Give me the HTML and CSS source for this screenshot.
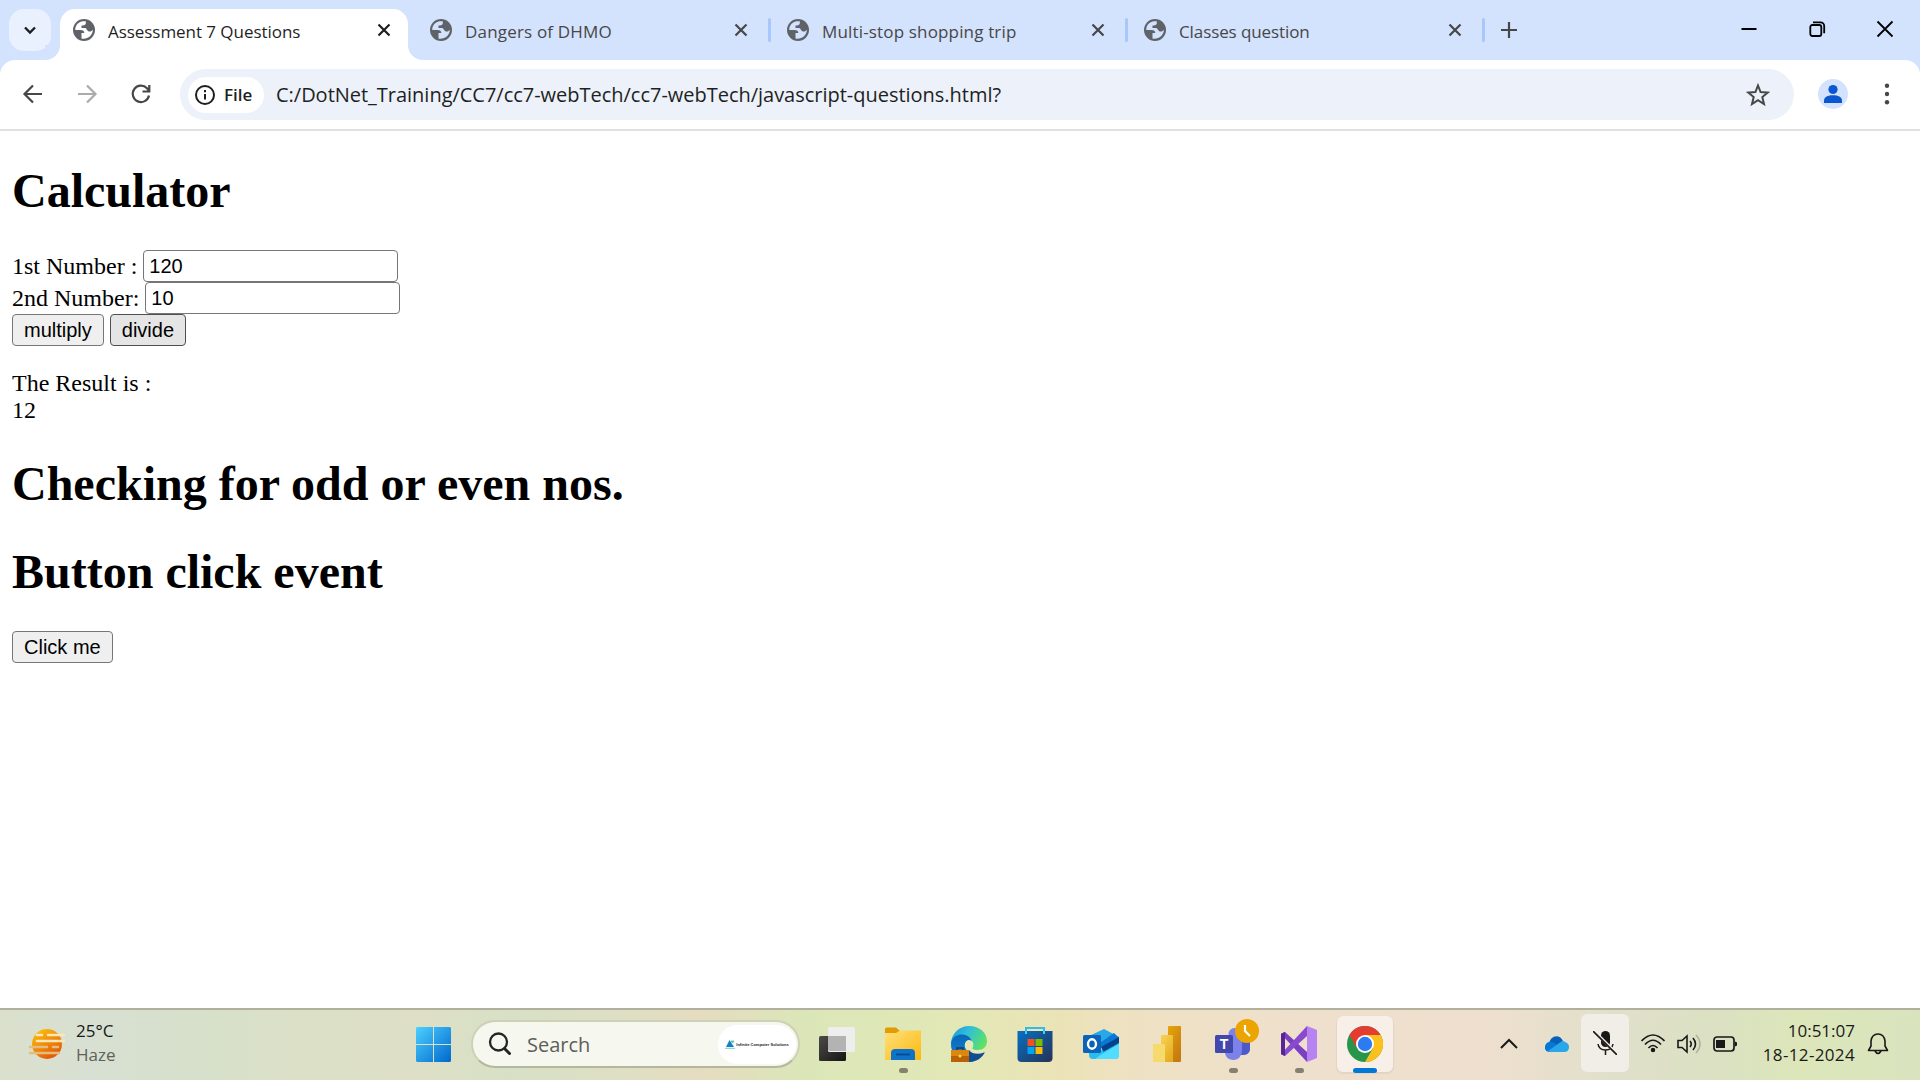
FILE: index.html
```html
<!DOCTYPE html>
<html lang="en">
<head>
<meta charset="utf-8">
<title>Assessment 7 Questions</title>
<link rel="stylesheet" href="styles.css">
</head>
<body>
<svg width="0" height="0" class="defs">
  <symbol id="globe" viewBox="0 0 22 22"><circle cx="11" cy="11" r="11" fill="#5f6368"/><path d="M10 2.300C6 2.700 3 5.500 2.300 9.500V11H7.500C10 11 11.300 12.200 11.300 14H8.500V19.600C14.500 20.700 19.800 16.500 19.900 10.500C18.500 13 16.300 12.800 15 12C13.500 11 13.800 9 11.800 9H8.500V6.600C11 6.600 12.500 6 12.800 4.500V2.300Z" fill="currentColor"/></symbol>
  <symbol id="x" viewBox="0 0 24 24"><path d="M6.500 6.500 17.500 17.500M17.500 6.500 6.500 17.500" stroke="currentColor" stroke-width="2.200" fill="none"/></symbol>
</svg>

<header class="tabstrip">
  <button class="tab-search"><svg width="16" height="16" viewBox="0 0 16 16"><path d="m3 5.500 5 5 5-5" fill="none" stroke="#1f1f1f" stroke-width="2.400"/></svg></button>
  <div class="tab active"><svg class="globe"><use href="#globe"/></svg><span class="label t1">Assessment 7 Questions</span><svg class="close"><use href="#x"/></svg></div>
  <div class="tab"><svg class="globe"><use href="#globe"/></svg><span class="label t2">Dangers of DHMO</span><svg class="close"><use href="#x"/></svg></div>
  <div class="tab"><svg class="globe"><use href="#globe"/></svg><span class="label t3">Multi-stop shopping trip</span><svg class="close"><use href="#x"/></svg></div>
  <div class="tab"><svg class="globe"><use href="#globe"/></svg><span class="label t4">Classes question</span><svg class="close"><use href="#x"/></svg></div>
  <svg class="plus" width="24" height="24" viewBox="0 0 24 24"><path d="M12 4v16M4 12h16" stroke="#474747" stroke-width="2.200"/></svg>
  <div class="window-controls">
    <svg viewBox="0 0 24 24"><path d="M4.500 12h15" stroke="#000" stroke-width="2"/></svg>
    <svg viewBox="0 0 24 24" fill="none" stroke="#000" stroke-width="1.800"><rect x="5.300" y="8" width="11" height="11" rx="2"/><path d="M8 5.300h7.500a3.700 3.700 0 0 1 3.700 3.700v7.300"/></svg>
    <svg viewBox="0 0 24 24"><path d="m4.500 4.500 15 15m0-15-15 15" stroke="#000" stroke-width="1.800"/></svg>
  </div>
</header>

<nav class="toolbar">
  <svg class="nav" viewBox="0 0 24 24"><path d="M21 12H4M12 3.500 3.500 12 12 20.500" /></svg>
  <svg class="nav disabled" viewBox="0 0 24 24"><path d="M3 12h17M12 3.500 20.500 12 12 20.500"/></svg>
  <svg class="nav" viewBox="0 0 24 24"><path d="M20 13.500A8.200 8.200 0 1 1 18 6.300L20 8.500M20.300 3v6.500H13.500"/></svg>
  <div class="omnibox">
    <div class="chip"><svg width="22" height="22" viewBox="0 0 22 22"><circle cx="11" cy="11" r="9" fill="none" stroke="#1f1f1f" stroke-width="2"/><path d="M11 10v5.500M11 6v2.200" stroke="#1f1f1f" stroke-width="2"/></svg><span>File</span></div>
    <span class="url">C:/DotNet_Training/CC7/cc7-webTech/cc7-webTech/javascript-questions.html?</span>
    <svg class="star" viewBox="0 0 24 24"><path d="m12 2.500 2.600 6.600 7.100.5-5.400 4.500 1.700 6.900-6-3.800-6 3.800 1.700-6.900-5.400-4.500 7.100-.5Z" fill="none" stroke="#474747" stroke-width="2"/></svg>
  </div>
  <svg class="avatar" viewBox="0 0 30 30"><circle cx="15" cy="15" r="15" fill="#d3e3fd"/><circle cx="15" cy="10.500" r="4.600" fill="#0b57d0"/><path d="M6 24v-2.500c0-3.500 4-5.200 9-5.200s9 1.700 9 5.200V24Z" fill="#0b57d0"/></svg>
  <svg class="menu" viewBox="0 0 24 24" fill="#474747"><circle cx="12" cy="3.800" r="2.200"/><circle cx="12" cy="12" r="2.200"/><circle cx="12" cy="20.200" r="2.200"/></svg>
</nav>

<main class="page">
  <h1>Calculator</h1>
  <form>
    <label>1st Number : <input type="text" value="120"></label><br>
    <label>2nd Number: <input type="text" value="10"></label><br>
    <button type="button">multiply</button> <button type="button" class="hovered">divide</button>
  </form>
  <p>The Result is :<br>12</p>
  <h1>Checking for odd or even nos.</h1>
  <h1>Button click event</h1>
  <button type="button">Click me</button>
</main>

<footer class="taskbar">
  <div class="weather">
    <svg width="36" height="36" viewBox="0 0 36 36"><defs><linearGradient id="sun" x1="0" y1="0" x2=".6" y2="1"><stop stop-color="#ffc90b"/><stop offset="1" stop-color="#e2590c"/></linearGradient></defs><circle cx="18" cy="18" r="15" fill="url(#sun)"/><g stroke-linecap="round" stroke-width="2.600"><path d="M8 9h5M19 9h16M8 15h27" stroke="#f9e8b5"/><path d="M1 21h17M24 21h5M1 27h29" stroke="#e5bd7a"/></g></svg>
    <div class="weather-text"><div class="temp">25°C</div><div class="haze">Haze</div></div>
  </div>
  <svg class="start" viewBox="0 0 35 35"><defs><linearGradient id="win" x1="0" y1="0" x2="1" y2="1"><stop stop-color="#4cd0ff"/><stop offset="1" stop-color="#0068cd"/></linearGradient></defs><path d="M1 0h16v17H0V1ZM18 0h16l1 1v16H18ZM0 18h17v17H1l-1-1ZM18 18h17v16l-1 1H18Z" fill="url(#win)"/></svg>
  <div class="search">
    <svg width="24" height="24" viewBox="0 0 24 24" fill="none" stroke="#242424"><circle cx="10.500" cy="10" r="8.500" stroke-width="2.300"/><path d="m16.500 16.500 5 5" stroke-width="3" stroke-linecap="round"/></svg>
    <span class="search-text">Search</span>
    <div class="brand"><svg width="10" height="9" viewBox="0 0 10 9"><path d="M4.500 0 9 7H1Z" fill="#1682c4"/><path d="M6 1h3L7.500 3ZM0 8.300h10" stroke="#42b8a8" stroke-width=".7" fill="#5bc8c0"/></svg><span>Infinite Computer Solutions</span></div>
  </div>
  <div class="apps">
    <div class="app"><svg viewBox="0 0 36 36"><defs><linearGradient id="tv" x1="0" y1="0" x2="1" y2="1"><stop stop-color="#4d4b49"/><stop offset="1" stop-color="#151515"/></linearGradient></defs><rect y="10" width="27" height="25" rx="1.500" fill="url(#tv)"/><rect x="9" y="1" width="27" height="25" rx="1.500" fill="#eee"/><path d="M9 10h18v15H10.500L9 24Z" fill="#b3b3b3"/></svg></div>
    <div class="app running"><svg viewBox="0 0 36 36"><defs><linearGradient id="fold" x1="0" y1="0" x2="1" y2="1"><stop stop-color="#ffe07a"/><stop offset="1" stop-color="#fcb90f"/></linearGradient></defs><path d="M0 8V3q0-1.500 1.500-1.500H11l4 3.500-3 3Z" fill="#df9c03"/><path d="M0 7h11l4-2.500h21V34H0Z" fill="url(#fold)"/><path d="M6 34v-7q0-4 4-4h16q4 0 4 4v7Z" fill="#0e73c8"/><path d="M11 28.500h14" stroke="#074a8e" stroke-width="1.800"/></svg></div>
    <div class="app"><svg viewBox="0 0 36 36"><defs><linearGradient id="eg" x1="0" y1="0" x2="1" y2=".6"><stop stop-color="#1792d7"/><stop offset=".4" stop-color="#30bcdc"/><stop offset="1" stop-color="#67ea4d"/></linearGradient><linearGradient id="eb" x1="0" y1="0" x2="0" y2="1"><stop stop-color="#0a66b8"/><stop offset="1" stop-color="#0f86dc"/></linearGradient></defs><path d="M0 18C0 8 8 0 18 0c11 0 18 7 18 15 0 6-4 9-9 9-3 0-6-.500-5.500-2 2-3 1-8-3.500-8-5 0-6 8-1 13l6 9h-5C8 36 0 28 0 18Z" fill="url(#eg)"/><path d="M0 17.500C1 11 6 8.500 11 8.500c5 0 9 3 9.500 6.500-1-1-4-2-6 1-3 5 2 11 8 12l4 5q-4 3-8.500 3C8 36 0 28 0 17.500Z" fill="url(#eb)"/><path d="M18 24c3 4 9 5 15 2.500q1-.500.500.500C31 32 25 36 18 36Z" fill="#104d92"/><path d="M6 24v-2h6v2" fill="none" stroke="#293844" stroke-width="1.500"/><path d="M0 24h18v12H0Z" fill="#b86107"/><path d="M0 24h18v6H0Z" fill="#dc850f"/><circle cx="9" cy="30" r="1.500" fill="#ffdc48"/></svg></div>
    <div class="app"><svg viewBox="0 0 36 36"><defs><linearGradient id="st" x1="0" y1="0" x2="1" y2="1"><stop stop-color="#0870c5"/><stop offset="1" stop-color="#253255"/></linearGradient></defs><path d="M9 8V2h18v6" fill="none" stroke="#31bce8" stroke-width="2"/><path d="M.5 5H35.500V32q0 4-4 4h-27q-4 0-4-4Z" fill="url(#st)"/><path d="M9 8V5M27 8V5" stroke="#40d2f5" stroke-width="2"/><path d="M10.500 13h7v7h-7Z" fill="#f25022"/><path d="M18.500 13h7v7h-7Z" fill="#7fba00"/><path d="M10.500 21h7v7h-7Z" fill="#00a4ef"/><path d="M18.500 21h7v7h-7Z" fill="#ffb900"/></svg></div>
    <div class="app"><svg viewBox="0 0 36 36"><path d="m6 10 15-7 15 8v10H6Z" fill="#28a8e8"/><path d="m17 17 14-10 5 5v7l-16 8Z" fill="#0878d4"/><path d="m18 21 18-10v7L22 27Z" fill="#05408a"/><path d="M6 20h10l4 6 16-9v12q0 4-4 4H10q-4 0-4-4Z" fill="#27bdee"/><path d="m19 28 17-10v11q0 4-4 4H12Z" fill="#52dcff"/><rect y="9" width="18" height="18" rx="1.500" fill="#0c64b8"/><ellipse cx="9" cy="18" rx="4" ry="4.700" fill="none" stroke="#fff" stroke-width="2.400"/></svg></div>
    <div class="app"><svg viewBox="0 0 36 36"><defs><linearGradient id="pb" x1="0" y1="0" x2=".6" y2="1"><stop stop-color="#e5a60a"/><stop offset="1" stop-color="#c67a12"/></linearGradient><linearGradient id="pc" x1="0" y1="0" x2=".6" y2="1"><stop stop-color="#f8d355"/><stop offset="1" stop-color="#e5ad23"/></linearGradient></defs><rect x="19" width="13" height="36" rx="1" fill="url(#pb)"/><path d="M12 9h11q1 0 1 1v26H12Z" fill="url(#pc)"/><path d="M4 19q0-1 1-1h10q1 0 1 1v17H5q-1 0-1-1Z" fill="#f6da6b"/></svg></div>
    <div class="app running"><svg class="teams" viewBox="0 0 44 44"><circle cx="19.500" cy="16" r="6" fill="#7b83eb"/><path d="M24 20h11v12q-1 5-7 5h-5Z" fill="#5059c9"/><path d="M10 20h17v13q-1 9-9 9-8-1-8-8Z" fill="#7b83eb"/><rect y="17" width="18" height="18" rx="1.500" fill="#4349ac"/><text x="9" y="31" class="teams-t">T</text><circle cx="32" cy="13" r="12" fill="#eca400"/><path d="M30 7v6l5 5" fill="none" stroke="#fff" stroke-width="2.200"/></svg></div>
    <div class="app running"><svg viewBox="0 0 36 36"><path d="m0 8 4-2v24l-4-2Z" fill="#52218a"/><path d="m4 6 22 20v10L0 8Z" fill="#7c3fc1"/><path d="m0 28L26 0v10L4 30Z" fill="#8a4ad0"/><path d="m0 8 4-2v24l-4-2Z" fill="#572596"/><path d="m26 0 10 4v28l-10 4Z" fill="#b783f2"/></svg></div>
    <div class="app current"><svg viewBox="0 0 36 36"><circle cx="18" cy="18" r="18" fill="#27964a"/><path d="M2.400 9A18 18 0 0 1 33.600 9H18L10.200 22.500Z" fill="#e43d30"/><path d="M18 9H33.600A18 18 0 0 1 18 36L25.800 22.500Z" fill="#fcc01c"/><circle cx="18" cy="18" r="9" fill="#fff"/><circle cx="18" cy="18" r="7.200" fill="#2c7bf0"/></svg></div>
  </div>
  <div class="tray">
    <svg class="chev" viewBox="0 0 24 24"><path d="m4 16 8-8 8 8" fill="none" stroke="#191919" stroke-width="2"/></svg>
    <svg class="cloud" viewBox="0 0 24 24"><path d="M4 12C5 4 14 1 18 9l-8 8Z" fill="#0860b8"/><path d="M4 20q-5-1-4-6 2-5 7-4l9 5-5 5Z" fill="#0878d4"/><path d="M3 19 15 10.500q3-3 6 0 3 1 3 4.500 0 5-5 5H5Z" fill="#28a8ea"/></svg>
    <div class="mic"><svg viewBox="0 0 24 24"><rect x="8" width="9" height="16" rx="4.500" fill="#191919"/><path d="M5 13q1 6 7.500 6T20 13M12.500 19v5" fill="none" stroke="#191919" stroke-width="1.500"/><path d="m1 0 23 23" stroke="#efeee6" stroke-width="3"/><path d="m0 0 24 24" stroke="#191919" stroke-width="1.600"/></svg></div>
    <svg class="sys" viewBox="0 0 24 24" fill="none" stroke="#191919" stroke-width="1.700"><path d="M.5 9Q12-3 23.500 9M4 12.500q8-8.500 16 0M7.500 16q4.500-5 9 0"/><circle cx="12" cy="18" r="1.400" fill="#191919"/></svg>
    <svg class="sys" viewBox="0 0 24 24" fill="none" stroke="#191919" stroke-width="1.600"><path d="M1 8.500h4l5-4.500v16l-5-4.500H1ZM13 9q2.500 3 0 6M16 6q5 6 0 12"/><path d="M19 3q8 9 0 18" stroke="#aeb4a0"/></svg>
    <svg class="sys" viewBox="0 0 24 24"><rect x="1" y="5" width="20" height="14" rx="3" fill="none" stroke="#191919" stroke-width="1.700"/><path d="M3 8h9v8H3ZM22 9.500l2 1v3l-2 1Z" fill="#191919"/></svg>
    <div class="clock"><div class="time">10:51:07</div><div class="date">18-12-2024</div></div>
    <svg class="bell" viewBox="0 0 22 24"><path d="M1.500 18.500 4 14V9q1-7 7-7t7 7v5l2.500 4.500ZM8 19q3 5 6 0" fill="none" stroke="#191919" stroke-width="1.600" stroke-linejoin="round"/></svg>
  </div>
</footer>
</body>
</html>
```
FILE: styles.css
```css
* { box-sizing: border-box; }
body {
  margin: 0;
  width: 1920px;
  height: 1080px;
  overflow: hidden;
  display: flex;
  flex-direction: column;
  background: #fff;
  font-family: "Open Sans", "Noto Sans", sans-serif;
}
svg { flex: none; display: block; }
.defs { position: absolute; }

/* Tab strip */
.tabstrip {
  height: 60px;
  flex: none;
  display: flex;
  background: #d3e2fd;
  padding-left: 9px;
}
.tab-search {
  width: 42px;
  height: 42px;
  margin: 9px 9px 0 0;
  padding: 0;
  border: 0;
  border-radius: 15px;
  background: #eaf1fe;
  display: grid;
  place-items: center;
}
.tab {
  position: relative;
  width: 357px;
  height: 42px;
  margin-top: 9px;
  padding-left: 13px;
  display: flex;
  align-items: center;
  color: #474747;
}
.globe { width: 22px; height: 22px; color: #d3e2fd; }
.label { width: 204px; margin-left: 13px; padding-top: 3px; font-size: 17px; white-space: nowrap; }
.close { width: 24px; height: 24px; margin-left: 60px; }
.tab:not(.active)::after {
  content: "";
  width: 3px;
  height: 24px;
  margin-left: 15px;
  border-radius: 2px;
  background: #a8c7fa;
}
.tab.active {
  width: 348px;
  height: 51px;
  margin-right: 9px;
  padding-bottom: 9px;
  border-radius: 15px 15px 0 0;
  background: #fff;
  color: #1f1f1f;
}
.tab.active .globe { color: #fff; }
.tab.active::before, .tab.active::after {
  content: "";
  position: absolute;
  bottom: 0;
  width: 15px;
  height: 15px;
}
.tab.active::before { left: -15px; background: radial-gradient(circle at 0 0, #d3e2fd 14.5px, #fff 15.5px); }
.tab.active::after { right: -15px; background: radial-gradient(circle at 100% 0, #d3e2fd 14.5px, #fff 15.5px); }
.t1 { letter-spacing: -0.05px; }
.t2 { letter-spacing: 0.18px; }
.t3 { letter-spacing: 0.16px; }
.t4 { letter-spacing: -0.1px; }
.plus { margin: 18px 0 0 9px; }
.window-controls { margin: 17px 23px 0 auto; display: flex; gap: 44px; }
.window-controls svg { width: 24px; height: 24px; }

/* Toolbar */
.toolbar {
  height: 71px;
  flex: none;
  display: flex;
  align-items: center;
  padding: 0 21px 1px;
  border-bottom: 2px solid #dfe0e2;
  background:
    radial-gradient(circle at 15px 15px, #fff 14.5px, #d3e2fd 15.5px) 0 0 / 15px 15px no-repeat,
    radial-gradient(circle at 0 15px, #fff 14.5px, #d3e2fd 15.5px) 100% 0 / 15px 15px no-repeat,
    #fff;
}
.nav { width: 24px; height: 24px; margin-right: 30px; fill: none; stroke: #474747; stroke-width: 2.2; }
.nav.disabled { stroke: #ababab; }
.omnibox {
  width: 1614px;
  height: 51px;
  margin-left: -3px;
  padding: 1px 24px 0 8px;
  border-radius: 26px;
  background: #ecf1fa;
  display: flex;
  align-items: center;
}
.chip {
  width: 76px;
  height: 36px;
  padding-left: 6px;
  border-radius: 18px;
  background: #fff;
  display: flex;
  align-items: center;
  gap: 8px;
  font-size: 17px;
  font-weight: 600;
  color: #1f1f1f;
}
.url { margin-left: 12px; font-size: 20px; letter-spacing: -0.02px; color: #1f1f1f; white-space: nowrap; }
.star { width: 24px; height: 24px; margin-left: auto; }
.avatar { width: 30px; height: 30px; margin-left: 24px; }
.menu { width: 24px; height: 24px; margin-left: 27px; }

/* Document */
.page {
  flex: 1;
  padding: 0 12px;
  overflow: hidden;
  font-family: "Liberation Serif", "Times New Roman", serif;
  font-size: 24px;
  line-height: 27px;
  color: #000;
}
.page h1 { margin: 32px 0 31px; font-size: 48px; line-height: 56px; }
.page form { line-height: 32px; }
.page p { margin: 24px 0 32px; }
.page input, .page button {
  height: 32px;
  margin: 0;
  border: 1.5px solid #767676;
  border-radius: 4px;
  font: 20px "Liberation Sans", Arial, sans-serif;
  color: #000;
  vertical-align: top;
}
.page input { width: 255px; padding: 1px 6px 1px 5px; background: #fff; }
.page button { padding: 0 11px; background: #efefef; }
.page button.hovered { background: #e5e5e5; border-color: #4f4f4f; }

/* Taskbar */
.taskbar {
  height: 72px;
  flex: none;
  display: flex;
  align-items: center;
  padding-bottom: 2px;
  border-top: 2px solid #b0b09c;
  background: linear-gradient(90deg, #dbe0cc 0, #d8e0d3 85px, #d6e0ca 200px, #dce0c7 300px, #dde0c6 430px, #d7e0c6 510px, #dedfc4 620px, #e5dcc0 700px, #dbe6b8 805px, #e2e8b6 950px, #ebe3b7 1060px, #eee1c2 1130px, #efe0cd 1300px, #efdfce 1480px, #dfe0ca 1620px, #dbe1c2 1720px, #dce6b9 1800px, #d9e4bf 1920px);
  color: #191919;
  font-size: 17px;
}
.weather { width: 416px; height: 68px; padding-left: 29px; display: flex; align-items: center; gap: 11px; line-height: 24px; }
.weather-text { padding-bottom: 2px; }
.haze { color: #606158; }
.start { width: 35px; height: 35px; margin-right: 20px; }
.search {
  width: 329px;
  height: 48px;
  padding: 0 2px 0 15px;
  border: 2px solid #cdd1b6;
  border-bottom-color: #b5b79d;
  border-radius: 24px;
  background: #f6f7ef;
  display: flex;
  align-items: center;
}
.search-text { margin: 0 auto 0 15px; font-size: 20px; color: #5e5e59; }
.brand {
  width: 78px;
  height: 39px;
  border-radius: 20px;
  background: #fff;
  display: flex;
  align-items: center;
  justify-content: center;
  gap: 1px;
  font: bold 4px "Liberation Sans", sans-serif;
  white-space: nowrap;
  color: #222;
}
.apps { display: flex; margin-left: 4px; }
.app { position: relative; width: 66px; height: 56px; display: grid; place-items: center; }
.app svg { width: 36px; height: 36px; }
.app svg.teams { width: 44px; height: 44px; margin: -8px 0 0 8px; }
.teams-t { font: bold 14px "Liberation Sans", sans-serif; fill: #fff; text-anchor: middle; }
.app.running::after, .app.current::after {
  content: "";
  position: absolute;
  left: 29px;
  bottom: -1px;
  width: 9px;
  height: 5px;
  border-radius: 3px;
  background: #85816e;
}
.app.current { width: 56px; margin-left: 5px; border-radius: 6px; background: #f8f0e8; box-shadow: 0 1px 1px 1px #e1d5c7; }
.app.current::after { left: 16px; width: 24px; background: #0078d4; }
.tray { display: flex; align-items: center; height: 68px; margin-left: 104px; }
.chev { width: 24px; height: 24px; margin-right: 24px; }
.cloud { width: 24px; height: 24px; margin-right: 12px; }
.mic { width: 48px; height: 58px; margin-right: 12px; margin-top: -2px; border-radius: 6px; background: #f0eee7; display: grid; place-items: center; }
.mic svg { width: 24px; height: 24px; }
.sys { width: 24px; height: 24px; margin-right: 12px; }
.clock { width: 106px; text-align: right; line-height: 24px; padding-bottom: 2px; white-space: nowrap; }
.date { letter-spacing: 0.35px; }
.bell { width: 22px; height: 24px; margin-left: 12px; }
```
